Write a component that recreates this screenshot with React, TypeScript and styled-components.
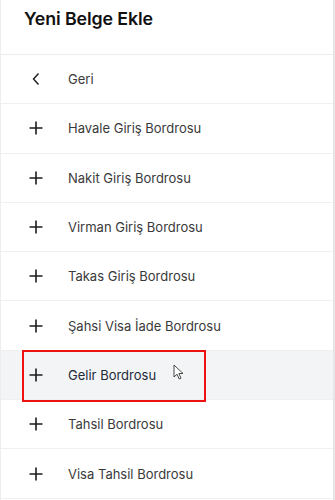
import React from "react";
import styled, { createGlobalStyle } from "styled-components";

const GlobalStyle = createGlobalStyle`
  html, body {
    margin: 0;
    padding: 0;
    background: #ffffff;
  }
  body {
    font-family: Inter, "Noto Sans", "Liberation Sans", sans-serif;
  }
`;

const Panel = styled.div`
  width: 335px;
  height: 500px;
  box-sizing: border-box;
  border-left: 1px solid #eeeeee;
  border-right: 2px solid #e6e6e6;
  background: #ffffff;
  overflow: hidden;
  position: relative;
`;

const Header = styled.div`
  height: 55px;
  box-sizing: border-box;
  display: flex;
  align-items: flex-start;
  padding: 8px 0 0 23px;
  border-bottom: 1px solid #ececec;
`;

const Title = styled.h1`
  margin: 0;
  font-size: 17.8px;
  font-weight: 600;
  color: #111111;
  letter-spacing: -0.1px;
`;

const List = styled.div`
  display: flex;
  flex-direction: column;
`;

const Row = styled.div<{ $active?: boolean }>`
  height: 49.3px;
  box-sizing: border-box;
  display: flex;
  align-items: center;
  border-bottom: 1px solid #f0f0f0;
  background: ${(p) => (p.$active ? "#f3f4f5" : "#ffffff")};
  position: relative;
  z-index: ${(p) => (p.$active ? 2 : 1)};
`;

const IconBox = styled.span`
  width: 14px;
  height: 14px;
  margin-left: 28px;
  margin-right: 25px;
  display: flex;
  align-items: center;
  justify-content: center;
  color: #1c1c1c;
`;

const Label = styled.span<{ $active?: boolean }>`
  font-size: 13px;
  color: ${(p) => (p.$active ? "#1f2a3a" : "#3a3a3a")};
`;

const Focus = styled.div`
  position: absolute;
  left: 21px;
  top: -1px;
  width: 184px;
  height: 52px;
  box-sizing: border-box;
  border: 2px solid #ee1111;
  pointer-events: none;
`;

const Cursor = styled.svg`
  position: absolute;
  left: 172px;
  top: 13px;
`;

const Plus = () => (
  <svg width="14" height="14" viewBox="0 0 14 14">
    <path d="M7 0.5V13.5M0.5 7H13.5" stroke="currentColor" strokeWidth="1.6" />
  </svg>
);

const Back = () => (
  <svg width="14" height="14" viewBox="0 0 14 14">
    <path d="M9.5 1.5L4.5 7L9.5 12.5" fill="none" stroke="currentColor" strokeWidth="1.4" />
  </svg>
);

const items = [
  "Havale Giriş Bordrosu",
  "Nakit Giriş Bordrosu",
  "Virman Giriş Bordrosu",
  "Takas Giriş Bordrosu",
  "Şahsi Visa İade Bordrosu",
  "Gelir Bordrosu",
  "Tahsil Bordrosu",
  "Visa Tahsil Bordrosu",
];

const App: React.FC = () => {
  return (
    <>
      <GlobalStyle />
      <Panel>
        <Header>
          <Title>Yeni Belge Ekle</Title>
        </Header>
        <List>
          <Row>
            <IconBox>
              <Back />
            </IconBox>
            <Label>Geri</Label>
          </Row>
          {items.map((text) => {
            const active = text === "Gelir Bordrosu";
            return (
              <Row key={text} $active={active}>
                <IconBox>
                  <Plus />
                </IconBox>
                <Label $active={active}>{text}</Label>
                {active && (
                  <>
                    <Focus />
                    <Cursor width="11" height="16" viewBox="0 0 11 16">
                      <path
                        d="M1 1V13L4 10.2L6.2 15L8 14.2L5.9 9.5H10L1 1Z"
                        fill="#ffffff"
                        stroke="#333333"
                        strokeWidth="0.9"
                        strokeLinejoin="round"
                      />
                    </Cursor>
                  </>
                )}
              </Row>
            );
          })}
        </List>
      </Panel>
    </>
  );
};

export default App;
